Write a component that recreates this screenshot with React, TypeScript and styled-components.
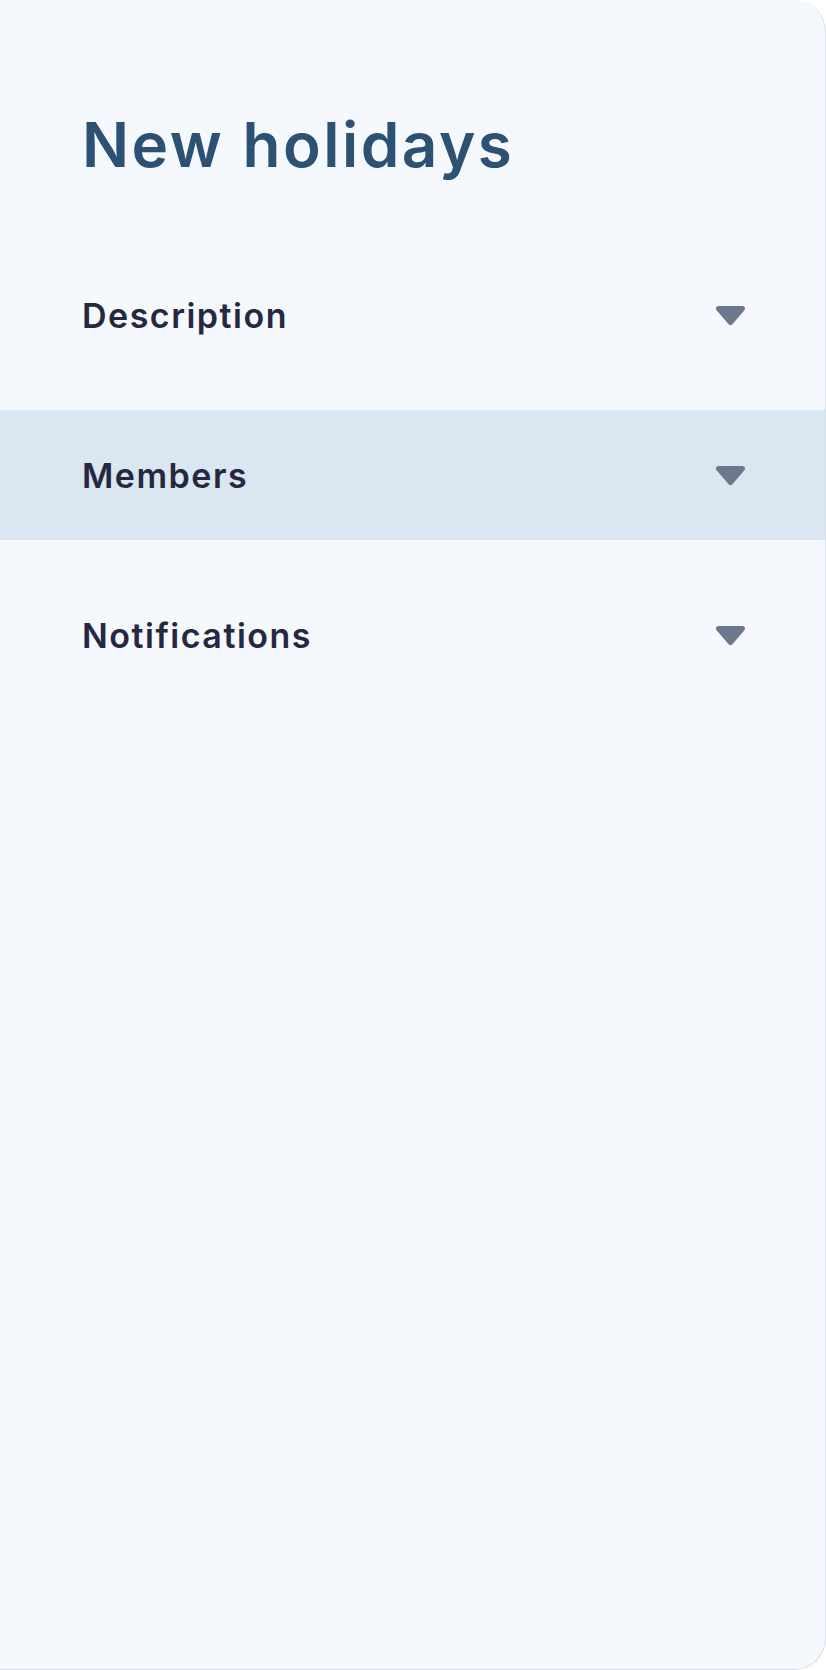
import styled, { createGlobalStyle } from "styled-components";

const GlobalStyle = createGlobalStyle`
  html, body {
    margin: 0;
    padding: 0;
    background: #ffffff;
  }

  * {
    box-sizing: border-box;
  }
`;

const sections = ["Description", "Members", "Notifications"];
const ACTIVE = "Members";

const Caret = () => (
  <svg width="31" height="21" viewBox="0 0 31 21" aria-hidden="true">
    <polygon
      points="3.5,3.5 27.5,3.5 15.5,17.5"
      fill="#6e7790"
      stroke="#6e7790"
      strokeWidth="5"
      strokeLinejoin="round"
    />
  </svg>
);

const App = () => {
  return (
    <>
      <GlobalStyle />
      <Panel>
        <Title>New holidays</Title>
        <SectionList>
          {sections.map((name) => (
            <SectionRow key={name} $active={name === ACTIVE}>
              <SectionLabel>{name}</SectionLabel>
              <Caret />
            </SectionRow>
          ))}
        </SectionList>
      </Panel>
    </>
  );
};

export default App;

const Panel = styled.div`
  width: 826px;
  height: 1670px;
  display: flex;
  flex-direction: column;
  background: #f5f9fd;
  border-right: 1px solid #d6e0ea;
  border-bottom: 1px solid #d6e0ea;
  border-radius: 0 32px 32px 0;
  padding-top: 107px;
  overflow: hidden;
  font-family: Inter, "Noto Sans", sans-serif;
`;

const Title = styled.h1`
  margin: 0 0 67px;
  padding: 0 0 0 82px;
  font-size: 62px;
  line-height: 76px;
  font-weight: 600;
  letter-spacing: 2.5px;
  color: #2d5173;
`;

const SectionList = styled.div`
  display: flex;
  flex-direction: column;
  gap: 30px;
`;

const SectionRow = styled.div<{ $active?: boolean }>`
  height: 130px;
  display: flex;
  align-items: center;
  justify-content: space-between;
  padding: 0 79px 0 82px;
  background: ${(p) => (p.$active ? "#dae6f0" : "transparent")};
  cursor: pointer;
`;

const SectionLabel = styled.span`
  font-size: 34px;
  font-weight: 600;
  letter-spacing: 1.5px;
  color: #262841;
`;
